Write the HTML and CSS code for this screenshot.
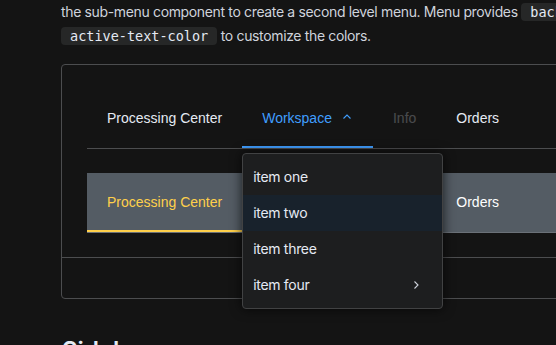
FILE: index.html
```html
<!DOCTYPE html>
<html>
<head>
<meta charset="utf-8">
<link rel="stylesheet" href="styles.css">
</head>
<body>
<div class="page">
  <p class="desc">the sub-menu component to create a second level menu. Menu provides <code>background-color</code>, <code>text-color</code> and<br><code>active-text-color</code> to customize the colors.</p>

  <div class="demo">
    <div class="showcase">
      <ul class="menu menu-default">
        <li class="item">Processing Center</li>
        <li class="item submenu active">
          <span>Workspace</span>
          <svg class="arrow" width="12" height="12" viewBox="0 0 12 12"><path d="M2.5 7.5 L6 4 L9.5 7.5" fill="none" stroke="currentColor" stroke-width="1.1"/></svg>
          <div class="popup">
            <div class="pop-item">item one</div>
            <div class="pop-item hover">item two</div>
            <div class="pop-item">item three</div>
            <div class="pop-item has-sub"><span>item four</span>
              <svg width="12" height="12" viewBox="0 0 12 12"><path d="M4.5 2.5 L8 6 L4.5 9.5" fill="none" stroke="currentColor" stroke-width="1.1"/></svg>
            </div>
          </div>
        </li>
        <li class="item disabled">Info</li>
        <li class="item">Orders</li>
      </ul>
      <div class="spacer"></div>
      <ul class="menu menu-dark">
        <li class="item active">Processing Center</li>
        <li class="item submenu">
          <span>Workspace</span>
          <svg class="arrow" width="12" height="12" viewBox="0 0 12 12"><path d="M2.5 4.5 L6 8 L9.5 4.5" fill="none" stroke="currentColor" stroke-width="1.1"/></svg>
        </li>
        <li class="item disabled">Info</li>
        <li class="item">Orders</li>
      </ul>
    </div>
    <div class="source-bar"></div>
  </div>

  <h3 class="heading">Sidebar</h3>
</div>
</body>
</html>
```

FILE: styles.css
```css
html, body {
  margin: 0;
  padding: 0;
  background: #141414;
  overflow: hidden;
}
body {
  width: 556px;
  height: 345px;
  font-family: Inter, "Noto Sans", sans-serif;
  color: #e5eaf3;
}
.page {
  padding-left: 61px;
  width: 900px;
}
.desc {
  margin: 0;
  font-size: 14px;
  line-height: 24px;
  letter-spacing: -0.35px;
  color: #cfd3dc;
  white-space: nowrap;
}
.desc code {
  font-family: "DejaVu Sans Mono", "Liberation Mono", monospace;
  font-size: 13.5px;
  letter-spacing: 0;
  background: #262727;
  color: #e5eaf3;
  padding: 1px 9px;
  border-radius: 4px;
}
.demo {
  margin-top: 16px;
  border: 1px solid #4c4d4f;
  border-radius: 4px;
  width: 800px;
}
.showcase {
  padding: 24px 0 24px 25px;
  border-bottom: 1px solid #4c4d4f;
}
.source-bar {
  height: 40px;
}
.spacer { height: 24px; }
.menu {
  list-style: none;
  margin: 0;
  padding: 0;
  display: flex;
  height: 60px;
  box-sizing: border-box;
  border-bottom: 1px solid #4c4d4f;
  font-family: "Liberation Sans", Arial, sans-serif;
  font-size: 14px;
}
.menu .item {
  position: relative;
  display: flex;
  align-items: center;
  height: 59px;
  box-sizing: border-box;
  padding: 0 20px;
  border-bottom: 2px solid transparent;
  white-space: nowrap;
  cursor: pointer;
}
.menu .submenu .arrow {
  margin-left: 9px;
  margin-top: -2px;
}
.menu-default .item { color: #e5eaf3; }
.menu-default .item.active {
  color: #409eff;
  border-bottom-color: #409eff;
}
.menu-default .item.disabled { opacity: 0.25; }
.menu-dark {
  background: #545c64;
  border-bottom-color: #6b7178;
}
.menu-dark .item { color: #ffffff; }
.menu-dark .item.active {
  color: #ffd04b;
  border-bottom-color: #ffd04b;
}
.menu-dark .item.disabled { opacity: 0.25; }
.popup {
  position: absolute;
  top: calc(100% + 7px);
  left: 0;
  width: 201px;
  box-sizing: border-box;
  padding: 5px 0;
  background: #1d1e1f;
  border: 1px solid #414243;
  border-radius: 4px;
  box-shadow: 0 0 12px rgba(0, 0, 0, 0.72);
  z-index: 10;
  font-family: Inter, "Noto Sans", sans-serif;
}
.pop-item {
  height: 36px;
  line-height: 36px;
  padding: 0 10px;
  color: #e5eaf3;
  font-size: 14px;
  letter-spacing: -0.3px;
}
.pop-item.hover { background: #18222c; }
.pop-item.has-sub {
  display: flex;
  align-items: center;
  justify-content: space-between;
  padding-right: 20px;
}
.pop-item.has-sub svg { color: #cfd3dc; }
.heading {
  margin: 36px 0 0 1px;
  font-size: 24px;
  line-height: 32px;
  font-weight: 600;
  color: #e5eaf3;
}
```
